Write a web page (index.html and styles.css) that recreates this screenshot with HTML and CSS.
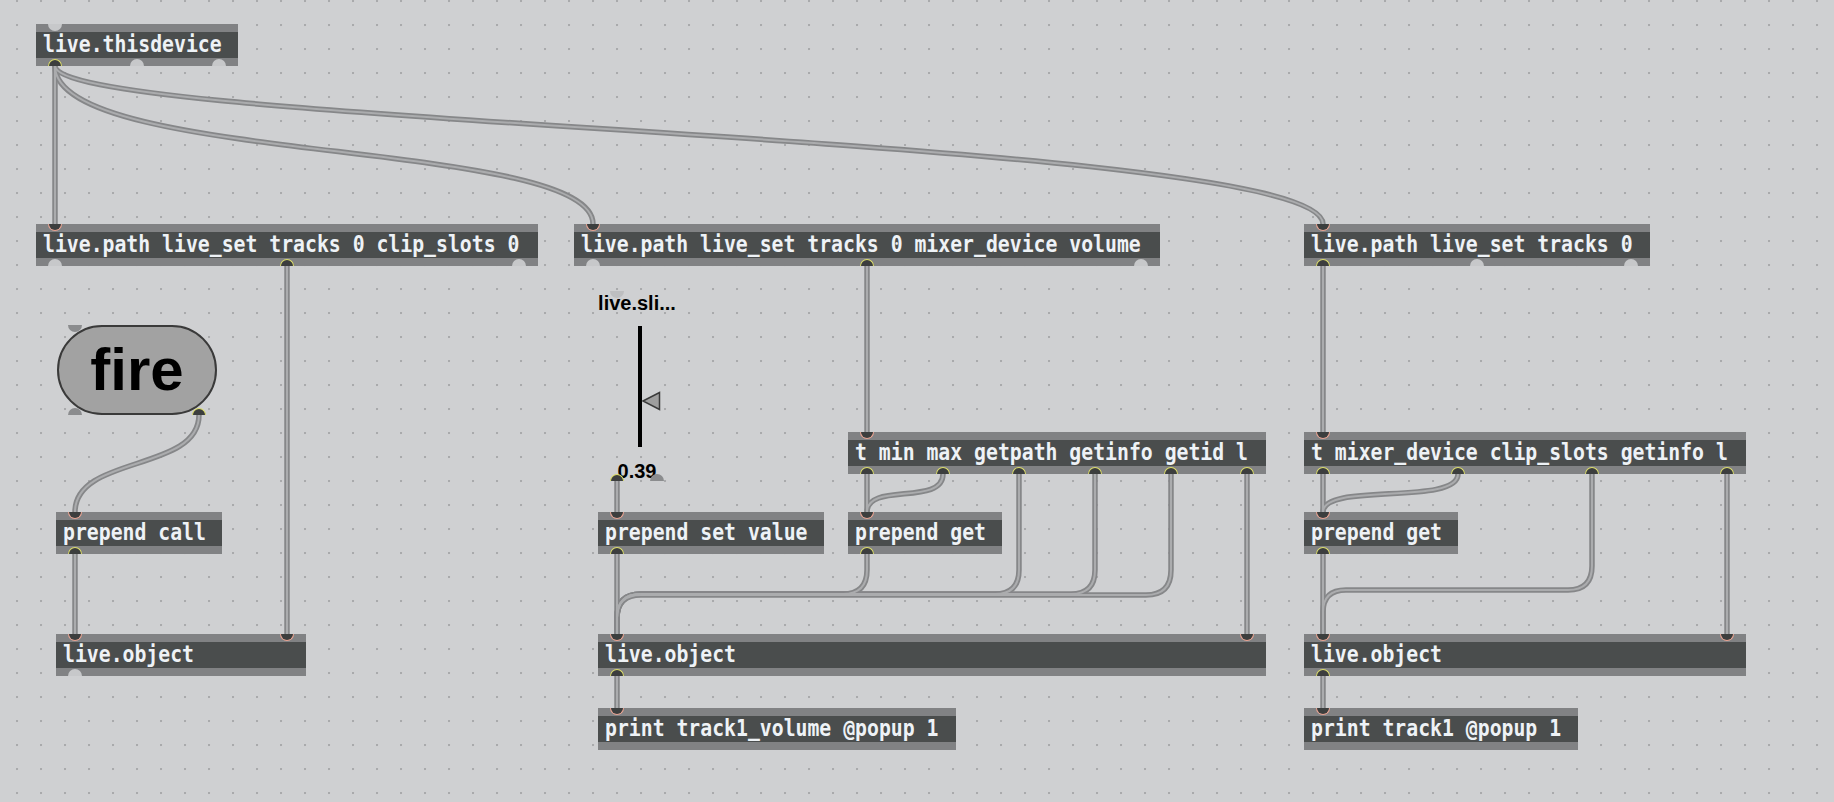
FILE: index.html
```html
<!DOCTYPE html>
<html>

<head>
    <meta charset="UTF-8" />
    <title>
        live.object patch
    </title>
    <link rel="stylesheet" href="styles.css">
</head>

<body>
<div class="patcher">

    <!-- patch cords, drawn under the boxes -->
    <svg class="cords" width="1834" height="802" viewBox="0 0 1834 802">
        <defs>
            <path id="c1" d="M55 66 V224" />
            <path id="c2" d="M55 66 C55 165 593 138 593 224" />
            <path id="c3" d="M55 66 C55 126 1323 136 1323 224" />
            <path id="c4" d="M287 266 V634" />
            <path id="c5" d="M867 266 V432" />
            <path id="c6" d="M1323 266 V432" />
            <path id="c7" d="M199 415 C199 472 75 455 75 512" />
            <path id="c8" d="M75 553 V634" />
            <path id="c9" d="M617 481 V512" />
            <path id="c10" d="M617 553 V634" />
            <path id="c11" d="M867 474 V512" />
            <path id="c12" d="M943 474 C943 506 867 482 867 512" />
            <path id="c13" d="M867 553 V570 Q867 594 843 594 H641 Q617 594 617 618 V634" />
            <path id="c14" d="M1019 474 V570 Q1019 594 995 594 H641 Q617 594 617 618 V634" />
            <path id="c15" d="M1095 474 V570 Q1095 594 1071 594 H641 Q617 594 617 618 V634" />
            <path id="c16" d="M1171 474 V570 Q1171 595 1146 595 H641 Q617 595 617 618 V634" />
            <path id="c17" d="M1247 474 V634" />
            <path id="c18" d="M617 676 V708" />
            <path id="c19" d="M1323 474 V512" />
            <path id="c20" d="M1458 474 C1458 506 1323 482 1323 512" />
            <path id="c21" d="M1323 553 V634" />
            <path id="c22" d="M1592 474 V566 Q1592 590 1568 590 H1346 Q1323 590 1323 612 V634" />
            <path id="c23" d="M1727 474 V634" />
            <path id="c24" d="M1323 676 V708" />
        </defs>
        <g class="cord-outer">
            <use href="#c1" /><use href="#c2" /><use href="#c3" /><use href="#c4" />
            <use href="#c5" /><use href="#c6" /><use href="#c7" /><use href="#c8" />
            <use href="#c9" /><use href="#c10" /><use href="#c11" /><use href="#c12" />
            <use href="#c13" /><use href="#c14" /><use href="#c15" /><use href="#c16" />
            <use href="#c17" /><use href="#c18" /><use href="#c19" /><use href="#c20" />
            <use href="#c21" /><use href="#c22" /><use href="#c23" /><use href="#c24" />
        </g>
        <g class="cord-inner">
            <use href="#c1" /><use href="#c2" /><use href="#c3" /><use href="#c4" />
            <use href="#c5" /><use href="#c6" /><use href="#c7" /><use href="#c8" />
            <use href="#c9" /><use href="#c10" /><use href="#c11" /><use href="#c12" />
            <use href="#c13" /><use href="#c14" /><use href="#c15" /><use href="#c16" />
            <use href="#c17" /><use href="#c18" /><use href="#c19" /><use href="#c20" />
            <use href="#c21" /><use href="#c22" /><use href="#c23" /><use href="#c24" />
        </g>
    </svg>

    <!-- top row -->
    <div class="obj thisdevice">
        <div class="band"><span class="txt">live.thisdevice</span></div>
        <i class="port in"></i>
        <i class="port out on"></i>
        <i class="port out td-mid"></i>
        <i class="port out right"></i>
    </div>

    <div class="obj path-clips">
        <div class="band"><span class="txt">live.path live_set tracks 0 clip_slots 0</span></div>
        <i class="port in on"></i>
        <i class="port out"></i>
        <i class="port out on pc-mid"></i>
        <i class="port out right"></i>
    </div>

    <div class="obj path-volume">
        <div class="band"><span class="txt">live.path live_set tracks 0 mixer_device volume</span></div>
        <i class="port in on"></i>
        <i class="port out"></i>
        <i class="port out on pv-mid"></i>
        <i class="port out right"></i>
    </div>

    <div class="obj path-track">
        <div class="band"><span class="txt">live.path live_set tracks 0</span></div>
        <i class="port in on"></i>
        <i class="port out on"></i>
        <i class="port out pt-mid"></i>
        <i class="port out right"></i>
    </div>

    <!-- left column -->
    <div class="fire">
        <div class="pill">fire</div>
        <i class="port in dim"></i>
        <i class="port out dim"></i>
        <i class="port out on right"></i>
    </div>

    <div class="obj prepend-call">
        <div class="band"><span class="txt">prepend call</span></div>
        <i class="port in on"></i>
        <i class="port out on"></i>
    </div>

    <div class="obj object-clips">
        <div class="band"><span class="txt">live.object</span></div>
        <i class="port in on"></i>
        <i class="port in on right"></i>
        <i class="port out"></i>
    </div>

    <!-- middle column -->
    <div class="slider">
        <div class="slider-label">live.sli...</div>
        <div class="track">
            <svg class="thumb" width="20" height="20" viewBox="0 0 20 20">
                <polygon points="2,10 18.5,1.5 18.5,18.5" />
            </svg>
        </div>
        <div class="slider-value">0.39</div>
        <i class="port in dim"></i>
        <i class="port out on"></i>
        <i class="port out dim right"></i>
    </div>

    <div class="obj trigger-volume">
        <div class="band"><span class="txt">t min max getpath getinfo getid l</span></div>
        <i class="port in on"></i>
        <i class="port out on"></i>
        <i class="port out on tv-2"></i>
        <i class="port out on tv-3"></i>
        <i class="port out on tv-4"></i>
        <i class="port out on tv-5"></i>
        <i class="port out on right"></i>
    </div>

    <div class="obj prepend-set">
        <div class="band"><span class="txt">prepend set value</span></div>
        <i class="port in on"></i>
        <i class="port out on"></i>
    </div>

    <div class="obj prepend-get-volume">
        <div class="band"><span class="txt">prepend get</span></div>
        <i class="port in on"></i>
        <i class="port out on"></i>
    </div>

    <div class="obj object-volume">
        <div class="band"><span class="txt">live.object</span></div>
        <i class="port in on"></i>
        <i class="port in on right"></i>
        <i class="port out on"></i>
    </div>

    <div class="obj print-volume">
        <div class="band"><span class="txt">print track1_volume @popup 1</span></div>
        <i class="port in on"></i>
    </div>

    <!-- right column -->
    <div class="obj trigger-track">
        <div class="band"><span class="txt">t mixer_device clip_slots getinfo l</span></div>
        <i class="port in on"></i>
        <i class="port out on"></i>
        <i class="port out on tt-2"></i>
        <i class="port out on tt-3"></i>
        <i class="port out on right"></i>
    </div>

    <div class="obj prepend-get-track">
        <div class="band"><span class="txt">prepend get</span></div>
        <i class="port in on"></i>
        <i class="port out on"></i>
    </div>

    <div class="obj object-track">
        <div class="band"><span class="txt">live.object</span></div>
        <i class="port in on"></i>
        <i class="port in on right"></i>
        <i class="port out on"></i>
    </div>

    <div class="obj print-track">
        <div class="band"><span class="txt">print track1 @popup 1</span></div>
        <i class="port in on"></i>
    </div>

</div>
</body>

</html>
```

FILE: styles.css
```css
body {
    margin: 0;
    background-color: #cfd0d2;
    background-image: radial-gradient(circle at 1px 1px, #a9aaac 1px, transparent 1.6px);
    background-size: 24px 24px;
    background-position: 16px 0;
}

.patcher {
    position: relative;
    width: 1834px;
    height: 802px;
    overflow: hidden;
}

.cords {
    position: absolute;
    left: 0;
    top: 0;
}

.cords path {
    fill: none;
}

.cord-outer use {
    fill: none;
    stroke: #868789;
    stroke-width: 5.5;
}

.cord-inner use {
    fill: none;
    stroke: #abacae;
    stroke-width: 2;
}

/* object boxes */
.obj {
    position: absolute;
    height: 42px;
    background-color: #818284;
}

.band {
    margin-top: 8px;
    height: 26px;
    padding-left: 7px;
    background-color: #4a4d4d;
    overflow: hidden;
}

.txt {
    display: inline-block;
    color: #eef2f6;
    font-family: "DejaVu Sans Mono", monospace;
    font-weight: bold;
    font-size: 19.8px;
    line-height: 26px;
    white-space: pre;
    transform: scaleY(1.2);
    transform-origin: 0 13px;
}

/* inlets and outlets */
.port {
    position: absolute;
    left: 12px;
    width: 14px;
    height: 7px;
    box-sizing: border-box;
    background-color: #c7c8ca;
}

.port.in {
    top: 0;
    border-radius: 0 0 7px 7px;
}

.port.out {
    bottom: 0;
    border-radius: 7px 7px 0 0;
}

.port.in.on {
    background-color: #3c3e3e;
    border: 1.5px solid #eba594;
    border-top: 0;
}

.port.out.on {
    background-color: #3c3e3e;
    border: 1.5px solid #dfe06c;
    border-bottom: 0;
}

.port.dim {
    background-color: #8b8c8e;
}

.port.right {
    left: auto;
    right: 12px;
}

/* box places */
.thisdevice { left: 36px; top: 24px; width: 202px; }
.path-clips { left: 36px; top: 224px; width: 502px; }
.path-volume { left: 574px; top: 224px; width: 586px; }
.path-track { left: 1304px; top: 224px; width: 346px; }

.prepend-call { left: 56px; top: 512px; width: 166px; }
.object-clips { left: 56px; top: 634px; width: 250px; }

.trigger-volume { left: 848px; top: 432px; width: 418px; }
.prepend-set { left: 598px; top: 512px; width: 226px; }
.prepend-get-volume { left: 848px; top: 512px; width: 154px; }
.object-volume { left: 598px; top: 634px; width: 668px; }
.print-volume { left: 598px; top: 708px; width: 358px; }

.trigger-track { left: 1304px; top: 432px; width: 442px; }
.prepend-get-track { left: 1304px; top: 512px; width: 154px; }
.object-track { left: 1304px; top: 634px; width: 442px; }
.print-track { left: 1304px; top: 708px; width: 274px; }

/* port places */
.td-mid { left: 94px; }
.pc-mid { left: 244px; }
.pv-mid { left: 286px; }
.pt-mid { left: 166px; }
.tv-2 { left: 88px; }
.tv-3 { left: 164px; }
.tv-4 { left: 240px; }
.tv-5 { left: 316px; }
.tt-2 { left: 147px; }
.tt-3 { left: 281px; }

/* fire button */
.fire {
    position: absolute;
    left: 57px;
    top: 325px;
    width: 160px;
    height: 90px;
}

.pill {
    height: 100%;
    box-sizing: border-box;
    border: 2px solid #3a3a3a;
    border-radius: 45px;
    background-color: #a2a2a2;
    color: #000;
    font-family: "Liberation Sans", Arial, sans-serif;
    font-weight: bold;
    font-size: 60px;
    line-height: 86px;
    text-align: center;
}

.fire .port {
    left: 11px;
}

.fire .port.right {
    left: auto;
    right: 11px;
}

/* live.slider */
.slider {
    position: absolute;
    left: 598px;
    top: 291px;
    width: 78px;
    height: 190px;
    font-family: "Liberation Sans", Arial, sans-serif;
    font-weight: bold;
    font-size: 20px;
    color: #000;
}

.slider-label {
    margin-top: 2px;
    line-height: 20px;
    text-align: center;
    white-space: nowrap;
}

.track {
    position: relative;
    margin: 13px 0 0 40px;
    width: 4px;
    height: 121px;
    background-color: #000;
}

.thumb {
    position: absolute;
    left: 3px;
    top: 65px;
}

.thumb polygon {
    fill: #9e9e9e;
    stroke: #3a3a3a;
    stroke-width: 1.5;
}

.slider-value {
    margin-top: 14px;
    line-height: 20px;
    text-align: center;
}

.slider .port.in {
    background-color: #bdbec0;
}
```
